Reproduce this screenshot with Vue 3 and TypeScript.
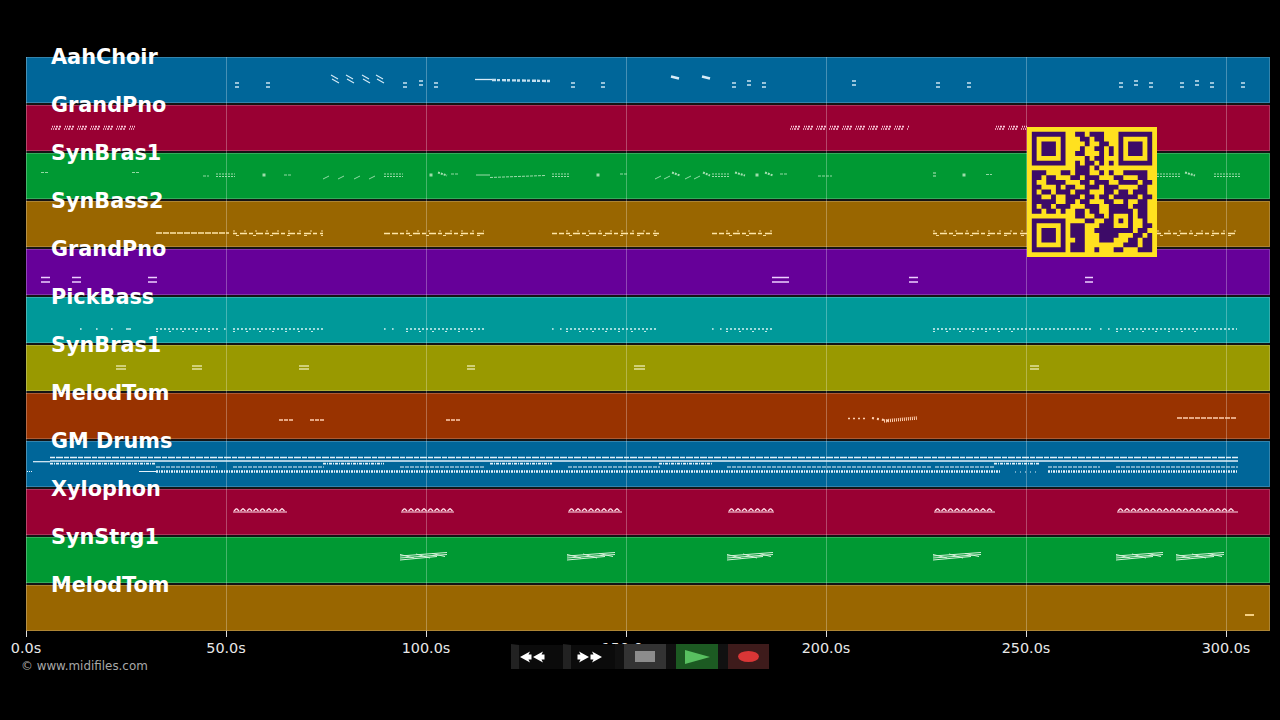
<script setup lang="ts">
interface Track { name: string; color: string }
interface Seg { x1: number; y1: number; x2: number; y2: number; w: number; dash?: string; c: string; o?: number }

const tracks: Track[] = [
  { name: 'AahChoir', color: '#006699' },
  { name: 'GrandPno', color: '#990033' },
  { name: 'SynBras1', color: '#009933' },
  { name: 'SynBass2', color: '#996600' },
  { name: 'GrandPno', color: '#660099' },
  { name: 'PickBass', color: '#009999' },
  { name: 'SynBras1', color: '#999900' },
  { name: 'MelodTom', color: '#993300' },
  { name: 'GM Drums', color: '#006699' },
  { name: 'Xylophon', color: '#990033' },
  { name: 'SynStrg1', color: '#009933' },
  { name: 'MelodTom', color: '#996600' }
]

const axis = ['0.0s', '50.0s', '100.0s', '150.0s', '200.0s', '250.0s', '300.0s']
const gridX = [26, 226, 426, 626, 826, 1026, 1226]

const segs: Seg[] = []
function h(x1: number, x2: number, y: number, w: number, c: string, dash?: string, o?: number) {
  segs.push({ x1, y1: y, x2, y2: y, w, c, dash, o })
}
function d(x1: number, y1: number, x2: number, y2: number, w: number, c: string, dash?: string, o?: number) {
  segs.push({ x1, y1, x2, y2, w, c, dash, o })
}

// AahChoir
const c0 = '#d8ecf8'
for (const [x, y] of [[235, 83], [266, 83], [403, 83], [419, 81], [434, 83], [571, 83], [601, 83], [732, 83], [747, 81], [762, 83], [852, 81], [936, 83], [967, 83], [1119, 83], [1134, 81], [1149, 83], [1180, 83], [1195, 81], [1210, 83], [1241, 83]]) {
  h(x, x + 4, y, 1.4, c0)
  h(x, x + 4, y + 4, 1.4, c0)
}
for (const x of [331, 346, 362, 376]) {
  d(x, 75, x + 7, 79, 1.1, c0)
  d(x + 1, 79, x + 8, 83, 1.1, c0)
}
h(475, 492, 79.5, 1.3, c0)
d(492, 80, 550, 81, 2.4, c0, '4 1 3 2', 0.9)
for (const x of [671, 702]) d(x, 76.5, x + 8, 78.5, 2.6, c0)

// GrandPno 1
const c1 = '#ffd0e0'
for (const [a, b] of [[51, 135], [790, 910], [995, 1027]]) {
  h(a + 1, b, 126.6, 1.6, c1, '1 1 1 1 2 1 2 4', 0.95)
  h(a, b - 1, 129, 1.6, c1, '1 1 1 1 2 1 2 4', 0.95)
}

// SynBras1 (green)
const c2 = '#b8e8c0'
for (const [a, b, y] of [[41, 48, 172.5], [132, 139, 172.5], [203, 209, 176], [284, 292, 175], [451, 459, 174], [620, 627, 174], [780, 787, 174], [818, 832, 176], [986, 992, 174.5]]) {
  h(a, b, y, 1, c2, '3 1', 0.8)
}
for (const [a, b] of [[216, 235], [384, 403], [552, 570], [712, 730], [1157, 1180], [1214, 1240]]) {
  h(a, b, 174, 1, c2, '2 1', 0.85)
  h(a, b, 176.5, 1, c2, '2 1', 0.85)
}
for (const x of [264, 431, 598, 757, 964]) {
  h(x - 1.5, x + 1.5, 175, 3, c2, undefined, 0.85)
}
for (const x of [323, 338, 354, 369, 655, 664, 685, 694]) d(x, 179, x + 6, 176, 1, c2, undefined, 0.8)
for (const [a, b] of [[438, 447], [735, 745], [672, 680], [703, 710], [765, 773], [1185, 1195]]) d(a, 172.5, b, 175.5, 2, c2, '2 1', 0.9)
h(476, 490, 175, 1, c2, undefined, 0.85)
d(490, 177.5, 545, 175.5, 1, c2, '3 1', 0.85)
h(933, 936, 173, 1, c2)
h(933, 936, 176, 1, c2)

// SynBass2
const c3 = '#ffe6a8'
h(156, 229, 233, 1.4, c3, '6 1')
for (const [a, b] of [[233, 323], [406, 484], [566, 659], [726, 773], [933, 1027], [1157, 1237]]) {
  h(a, b, 233.5, 1.4, c3, '4 3 7 2')
  h(a, b, 231, 1, c3, '2 9', 0.9)
  h(a + 3, b, 235.5, 1, c3, '3 14', 0.9)
}
h(384, 404, 233.5, 1.4, c3, '6 2')
h(552, 564, 233.5, 1.4, c3, '5 2')
h(712, 724, 233.5, 1.4, c3, '5 2')

// GrandPno purple
const c4 = '#eed0ff'
for (const [a, b] of [[41, 50], [72, 81], [148, 157], [772, 789], [909, 918], [1085, 1093]]) {
  h(a, b, 277.5, 1.5, c4)
  h(a, b, 282, 1.5, c4)
}

// PickBass
const c5 = '#d8f4f4'
for (const x of [80, 96, 111, 224, 384, 392, 552, 560, 712, 720, 1100, 1108]) h(x, x + 1.6, 329, 1.6, c5)
h(126, 131, 329, 1.4, c5)
for (const [a, b] of [[156, 219], [233, 323], [406, 484], [566, 658], [726, 772], [933, 1092], [1116, 1237]]) {
  h(a, b, 329, 1.3, c5, '2 2')
  h(a, Math.min(b, a + 90), 331.5, 1, c5, '2 11', 0.9)
}

// Olive pairs
const c6 = '#eeeeb8'
for (const [a, b] of [[116, 126], [192, 202], [299, 309], [467, 475], [634, 645], [1030, 1039]]) {
  h(a, b, 366, 1.3, c6)
  h(a, b, 369, 1.3, c6)
}

// MelodTom rust
const c7 = '#ffd0b0'
h(279, 293, 420, 1.4, c7, '4 1')
h(310, 324, 420, 1.4, c7, '4 1')
h(446, 461, 420, 1.4, c7, '4 1')
h(848, 868, 418.5, 1.3, c7, '2 3')
d(872, 418, 890, 421, 2.2, c7, '2 3')
d(884, 421, 917, 418, 3.4, c7, '1 1')
h(1177, 1237, 418, 1.4, c7, '5 1')

// GM Drums
const c8 = '#e4f2fa'
h(50, 1238, 457.5, 1.3, c8, '5 1 7 1')
h(33, 50, 461.7, 1.2, c8, undefined)
h(50, 1238, 461, 1.4, c8)
for (const [a, b] of [[50, 155], [323, 384], [490, 552], [659, 713], [994, 1040]]) {
  h(a, b, 463.7, 1.8, c8, '3 1 1 1')
}
for (const [a, b] of [[156, 217], [233, 324], [400, 484], [568, 660], [727, 932], [935, 995], [1048, 1100], [1116, 1238]]) {
  h(a, b, 467, 1.2, c8, '4 1')
}
h(27, 33, 471.5, 1, c8, '1 1')
h(139, 156, 471.5, 1, c8)
h(156, 1000, 471.5, 2.6, c8, '2 1 1 1')
h(1015, 1037, 472, 1, c8, '1 4')
h(1048, 1238, 471.5, 2.6, c8, '2 1 1 1')

// Xylophon
const c9 = '#ffe0ea'
for (const [a, b] of [[233, 287], [401, 454], [568, 622], [728, 774], [934, 995], [1117, 1238]]) {
  h(a, b, 512, 1.1, c9)
  for (let x = a + 1; x < b - 3; x += 6.5) {
    d(x, 511, x + 2.5, 508.5, 1.2, c9)
    d(x + 2.5, 508.5, x + 5, 511, 1.2, c9)
  }
}

// SynStrg1
const c10 = '#d6f2da'
for (const [a, b] of [[400, 447], [567, 615], [727, 773], [933, 981], [1116, 1163], [1176, 1224]]) {
  d(a, 556, b, 552.5, 1, c10)
  d(a, 558, b, 554.5, 1, c10)
  d(a, 560, b - 10, 556.5, 1, c10)
  d(a, 554.5, a + 14, 558, 1, c10)
  d(a + 16, 554, a + 30, 558, 1, c10)
  d(a + 32, 553.5, b - 2, 556.5, 1, c10)
}

// MelodTom last
h(1245, 1254, 615, 1.8, '#ffdc90')

const matrix: string[] = [
  '1111111' + '0' + '011011100' + '0' + '1111111',
  '1000001' + '0' + '001101100' + '0' + '1000001',
  '1011101' + '0' + '000100110' + '0' + '1011101',
  '1011101' + '0' + '001001101' + '0' + '1011101',
  '1011101' + '0' + '011000101' + '0' + '1011101',
  '1000001' + '0' + '000101100' + '0' + '1000001',
  '1111111' + '0' + '010110101' + '0' + '1111111',
  '00000000' + '011101000' + '00000000',
  '1110001101110010100111110',
  '1101100011011100011000110',
  '1001111000110111001111011',
  '1100010110011101110000110',
  '1011011101110001101101110',
  '1100100111011011011111011',
  '1111100110110001100100110',
  '1011011100011100111101110',
  '1101101001101100111110110',
  '00000000' + '01100110' + '10001' + '0110',
  '11111110' + '00011001' + '10101' + '0010',
  '10000010' + '11100011' + '10001' + '0011',
  '10111010' + '11100111' + '11111' + '0110',
  '10111010' + '11100011' + '11000' + '1101',
  '10111010' + '01100011' + '10001' + '1011',
  '10000010' + '11100000' + '00011' + '1011',
  '11111110' + '11100100' + '01100' + '0111'
]
const qrPath = matrix
  .flatMap((row, y) => [...row].map((v, x) => (v === '1' ? `M${x} ${y}h1v1h-1z` : '')))
  .join('')
</script>

<template>
  <div class="page">
    <div class="plot">
      <div v-for="(t, i) in tracks" :key="i" class="track" :style="{ background: t.color }">
        <span class="track-name">{{ t.name }}</span>
      </div>

      <svg class="notes" viewBox="26 57 1244 574" width="1244" height="574" aria-hidden="true">
        <line v-for="x in gridX" :key="x" :x1="x + 0.5" :x2="x + 0.5" y1="57" y2="631" stroke="#fff" stroke-opacity="0.28" />
        <line
          v-for="(s, i) in segs"
          :key="'s' + i"
          :x1="s.x1"
          :y1="s.y1"
          :x2="s.x2"
          :y2="s.y2"
          :stroke="s.c"
          :stroke-width="s.w"
          :stroke-dasharray="s.dash"
          :stroke-opacity="s.o ?? 1"
        />
      </svg>

      <svg class="qr" viewBox="-1 -1 27 27" width="130" height="130" aria-label="QR code">
        <rect x="-1" y="-1" width="27" height="27" fill="#ffe11f" />
        <path :d="qrPath" fill="#3d0b68" />
      </svg>
    </div>

    <div class="axis">
      <div v-for="a in axis" :key="a" class="tick">
        <i class="tick-mark"></i>
        <span class="tick-label">{{ a }}</span>
      </div>
    </div>

    <div class="credit">© www.midifiles.com</div>

    <div class="controls">
      <div class="btn seek">
        <svg width="25" height="12" viewBox="0 0 25 12"><path d="M0 6 10 .5 8.500 3.500H11.500V8.500H8.500L10 11.500zM13 6 23 .5 21.500 3.500H24.500V8.500H21.500L23 11.500z" fill="#fff" /></svg>
      </div>
      <div class="btn seek second">
        <svg width="25" height="12" viewBox="0 0 25 12"><path d="M.5 3.500H3.500L2 .5 12 6 2 11.500 3.500 8.500H.5zM13.500 3.500H16.500L15 .5 25 6 15 11.500 16.500 8.500H13.500z" fill="#fff" /></svg>
      </div>
      <div class="btn stop"><i></i></div>
      <div class="btn play">
        <svg width="26" height="14" viewBox="0 0 26 14"><path d="M1 0 26 7 1 14z" fill="#58c060" /></svg>
      </div>
      <div class="btn rec"><i></i></div>
    </div>
  </div>
</template>

<style>
html, body { margin: 0; background: #000; }
</style>

<style scoped>
.page {
  position: relative;
  width: 1280px;
  height: 720px;
  box-sizing: border-box;
  padding: 57px 10px 0 26px;
  background: #000;
  overflow: hidden;
  font-family: "DejaVu Sans", sans-serif;
  display: flex;
  flex-direction: column;
}
.plot {
  position: relative;
  width: 1244px;
  height: 574px;
  display: flex;
  flex-direction: column;
  gap: 2px;
  background: #141414;
}
.track {
  position: relative;
  flex: 1 1 0;
  box-sizing: border-box;
  border: 1px solid rgba(255, 255, 255, 0.2);
  border-left: 0;
}
.track-name {
  position: absolute;
  z-index: 3;
  left: 25px;
  top: -13px;
  color: #fff;
  font-size: 20.8px;
  line-height: 24px;
  font-weight: 700;
  white-space: nowrap;
}
.notes {
  position: absolute;
  inset: 0;
  z-index: 1;
}
.qr {
  position: absolute;
  z-index: 2;
  left: 1001px;
  top: 70px;
}
.axis {
  display: grid;
  grid-template-columns: repeat(6, 200px) 44px;
  height: 30px;
}
.tick {
  position: relative;
}
.tick-mark {
  display: block;
  width: 1px;
  height: 6px;
  background: #ddd;
}
.tick-label {
  position: absolute;
  left: 0;
  top: 8px;
  transform: translateX(-50%);
  color: #e8e8e8;
  font-size: 14.4px;
  line-height: 18px;
  white-space: nowrap;
}
.credit {
  position: absolute;
  left: 21px;
  top: 658px;
  color: #a8a8a8;
  font-size: 11.9px;
  line-height: 16px;
}
.controls {
  position: absolute;
  z-index: 4;
  left: 511px;
  top: 644px;
  width: 258px;
  height: 25px;
  background: #111;
  display: flex;
}
.btn {
  box-sizing: border-box;
  height: 25px;
  display: flex;
  align-items: center;
  justify-content: center;
}
.seek {
  width: 52px;
  border-left: 8px solid #222;
  border-top: 1px solid #000;
  background: #0b0b0b;
  justify-content: flex-start;
  padding-left: 1px;
}
.seek.second {
  width: 52px;
  padding-left: 6px;
}
.stop {
  width: 42px;
  margin-left: 9px;
  background: #333;
}
.stop i {
  width: 20px;
  height: 11px;
  background: #8c8c8c;
}
.play {
  width: 42px;
  margin-left: 10px;
  background: #1c5a22;
}
.rec {
  width: 41px;
  margin-left: 10px;
  background: #3e1b1b;
}
.rec i {
  width: 21px;
  height: 11px;
  border-radius: 50%;
  background: #d93636;
}
</style>
